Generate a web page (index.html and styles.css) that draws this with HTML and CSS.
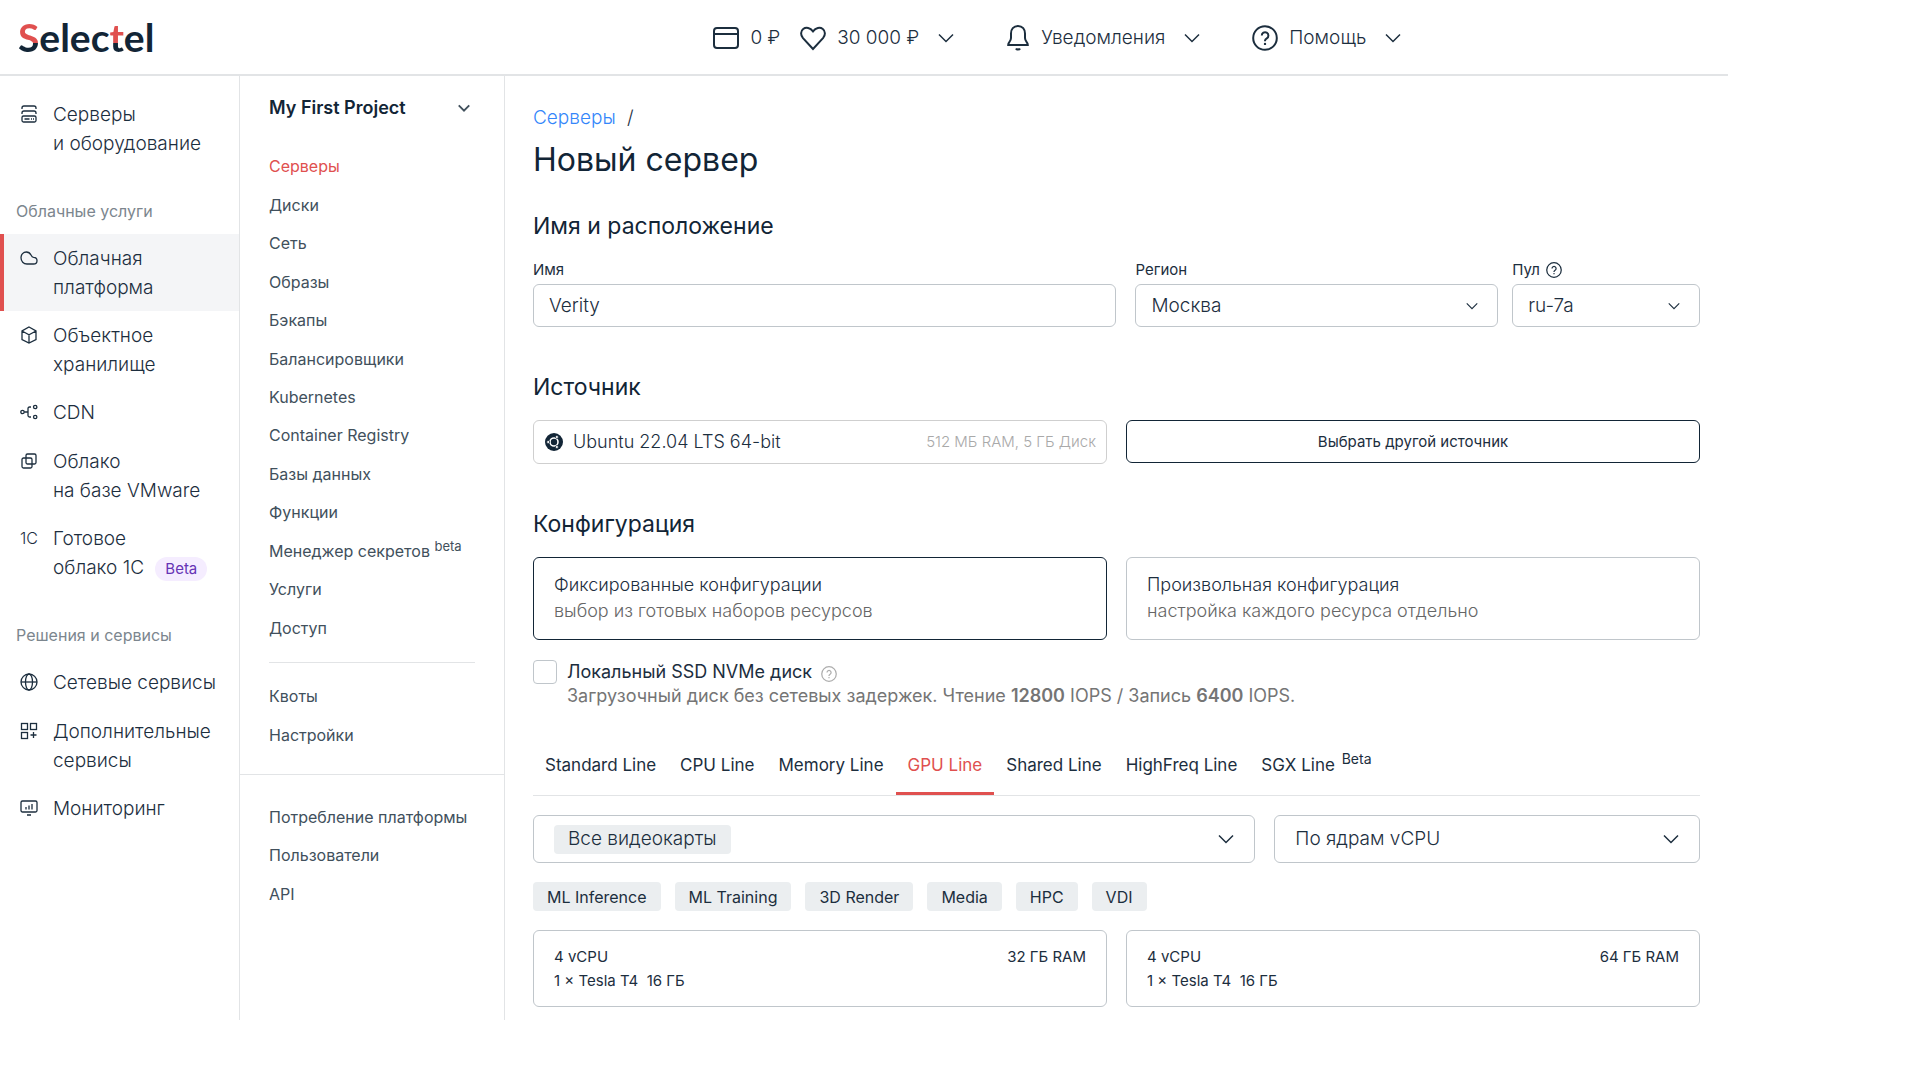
FILE: index.html
```html
<!DOCTYPE html>
<html lang="ru">
<head>
<meta charset="utf-8">
<meta name="viewport" content="width=device-width, initial-scale=1">
<title>Новый сервер — Selectel</title>
<link rel="stylesheet" href="styles.css">
</head>
<body>
<svg class="sprite" aria-hidden="true">
  <symbol id="chevron" viewBox="0 0 16 10"><path d="M1 1.5 8 8.5 15 1.5"/></symbol>
  <symbol id="help" viewBox="0 0 26 26"><circle cx="13" cy="13" r="11.8"/><path d="M9.8 10.6a3.3 3.3 0 1 1 5 2.8c-1.2.7-1.8 1.2-1.8 2.4v.4"/><circle class="dot" cx="13" cy="18.9" r="1.2"/></symbol>
</svg>
<div class="app">
  <header class="header">
    <a class="logo" href="#" aria-label="Selectel"><span class="logo-s">S</span>elec<span class="logo-t">t</span>el</a>
    <nav class="topbar" aria-label="Аккаунт">
      <button class="top-item balance" type="button">
        <svg class="icon-top" viewBox="0 0 26 26"><rect x="1" y="3" width="24" height="20" rx="3"/><path d="M1 9h24"/></svg>
        <span>0 ₽</span>
        <svg class="icon-top heart" viewBox="0 0 26 26"><path d="M13 24 3 13.2C.4 10.2.5 6 3.200 4c2.900-2.200 7-1.300 9.800 2.400C15.800 2.700 19.900 1.800 22.800 4c2.700 2 2.800 6.200.2 9.200z"/></svg>
        <span>30 000 ₽</span>
        <svg class="chevron top-chevron"><use href="#chevron"/></svg>
      </button>
      <button class="top-item" type="button">
        <svg class="icon-top bell" viewBox="0 0 24 26"><path d="M12 1C7.500 1 5 4.400 5 8.500v4.500c0 1.800-.7 3-1.800 4.400-.6.800-1 1.600-1 2.600h19.600c0-1-.4-1.800-1-2.600C19.700 16 19 14.800 19 13V8.500C19 4.400 16.500 1 12 1z"/><path d="M10 23.500c.6 1.400 3.400 1.400 4 0"/></svg>
        <span>Уведомления</span>
        <svg class="chevron top-chevron"><use href="#chevron"/></svg>
      </button>
      <button class="top-item" type="button">
        <svg class="icon-top"><use href="#help"/></svg>
        <span>Помощь</span>
        <svg class="chevron top-chevron"><use href="#chevron"/></svg>
      </button>
    </nav>
  </header>

  <div class="columns">
    <nav class="services" aria-label="Услуги">
      <ul>
        <li><a class="service" href="#"><svg class="icon" viewBox="0 0 18 18"><path d="M2 4V3a2 2 0 0 1 2-2h10a2 2 0 0 1 2 2v1M2 9V8a2 2 0 0 1 2-2h10a2 2 0 0 1 2 2v1"/><rect x="2" y="11" width="14" height="6" rx="1.500"/><path d="M4.500 14h5M11 14h1M13 14h1"/></svg><span>Серверы<br>и оборудование</span></a></li>
      </ul>
      <h2 class="group-title">Облачные услуги</h2>
      <ul>
        <li><a class="service active" href="#" aria-current="page"><svg class="icon" viewBox="0 0 18 18"><path d="M6.300 3C3.300 3 1 5.500 1 8.700 1 12.300 3.500 15 7 15h6.400C15.600 15 17 13.500 17 11.700c0-2-1.400-3.300-3.400-3.400C12.300 8.200 11.700 7.500 11 6 10 4 8.500 3 6.300 3z"/></svg><span>Облачная<br>платформа</span></a></li>
        <li><a class="service" href="#"><svg class="icon" viewBox="0 0 18 18"><path d="M9 1 16 5v8.500L9 17 2 13.500V5zM2 5l7 3.800L16 5M9 8.800V17"/></svg><span>Объектное<br>хранилище</span></a></li>
        <li><a class="service" href="#"><svg class="icon" viewBox="0 0 18 18"><circle cx="2.500" cy="9" r="1.700"/><circle cx="15.200" cy="4" r="1.700"/><circle cx="15.200" cy="14" r="1.700"/><path d="M4.300 9H8M11 4H9.500Q8 4 8 5.500v7Q8 14 9.500 14H11"/></svg><span>CDN</span></a></li>
        <li><a class="service" href="#"><svg class="icon" viewBox="0 0 18 18"><rect x="6" y="2" width="10" height="10" rx="1.500"/><rect x="2" y="6" width="10" height="10" rx="1.500"/></svg><span>Облако<br>на базе VMware</span></a></li>
        <li><a class="service" href="#"><span class="icon icon-text">1С</span><span>Готовое<br>облако 1С <span class="badge">Beta</span></span></a></li>
      </ul>
      <h2 class="group-title">Решения и сервисы</h2>
      <ul>
        <li><a class="service" href="#"><svg class="icon" viewBox="0 0 18 18"><circle cx="9" cy="9" r="8"/><ellipse cx="9" cy="9" rx="3.500" ry="8"/><path d="M1 9h16"/></svg><span>Сетевые сервисы</span></a></li>
        <li><a class="service" href="#"><svg class="icon" viewBox="0 0 18 18"><rect x="1.500" y="1.500" width="6" height="6"/><rect x="10.500" y="1.500" width="6" height="6"/><rect x="1.500" y="10.500" width="6" height="6"/><path d="M13.500 10v6M10.500 13h6"/></svg><span>Дополнительные<br>сервисы</span></a></li>
        <li><a class="service" href="#"><svg class="icon" viewBox="0 0 18 18"><rect x="1" y="2" width="16" height="11" rx="1.500"/><path d="M7 16h4M6 10.500V8M9 10.500V6.500M12 10.500V5"/></svg><span>Мониторинг</span></a></li>
      </ul>
    </nav>

    <nav class="project" aria-label="Проект">
      <button class="project-switch" type="button">My First Project <svg class="chevron project-chevron"><use href="#chevron"/></svg></button>
      <ul class="menu menu-main">
        <li><a class="current" href="#">Серверы</a></li>
        <li><a href="#">Диски</a></li>
        <li><a href="#">Сеть</a></li>
        <li><a href="#">Образы</a></li>
        <li><a href="#">Бэкапы</a></li>
        <li><a href="#">Балансировщики</a></li>
        <li><a href="#">Kubernetes</a></li>
        <li><a href="#">Container Registry</a></li>
        <li><a href="#">Базы данных</a></li>
        <li><a href="#">Функции</a></li>
        <li><a href="#">Менеджер секретов <sup>beta</sup></a></li>
        <li><a href="#">Услуги</a></li>
        <li><a href="#">Доступ</a></li>
      </ul>
      <hr class="menu-divider">
      <ul class="menu menu-settings">
        <li><a href="#">Квоты</a></li>
        <li><a href="#">Настройки</a></li>
      </ul>
      <ul class="menu menu-account">
        <li><a href="#">Потребление платформы</a></li>
        <li><a href="#">Пользователи</a></li>
        <li><a href="#">API</a></li>
      </ul>
    </nav>

    <main class="main">
      <div class="breadcrumbs"><a href="#">Серверы</a> <span>/</span></div>
      <h1>Новый сервер</h1>

      <section>
        <h2>Имя и расположение</h2>
        <div class="place">
          <div class="field">
            <label for="name">Имя</label>
            <input class="control" id="name" type="text" value="Verity">
          </div>
          <div class="field">
            <label for="region">Регион</label>
            <div class="select">
              <select class="control" id="region"><option>Москва</option></select>
              <svg class="chevron field-chevron"><use href="#chevron"/></svg>
            </div>
          </div>
          <div class="field">
            <label for="pool">Пул <svg class="help-small"><use href="#help"/></svg></label>
            <div class="select">
              <select class="control" id="pool"><option>ru-7a</option></select>
              <svg class="chevron field-chevron"><use href="#chevron"/></svg>
            </div>
          </div>
        </div>
      </section>

      <section>
        <h2>Источник</h2>
        <div class="pair">
          <div class="source">
            <svg class="os" viewBox="0 0 18 18"><circle class="os-bg" cx="9" cy="9" r="9"/><circle class="os-ring" cx="9" cy="9" r="4"/><circle class="os-dot" cx="3.200" cy="9" r="1.500"/><circle class="os-dot" cx="11.900" cy="4" r="1.500"/><circle class="os-dot" cx="11.900" cy="14" r="1.500"/></svg>
            <span>Ubuntu 22.04 LTS 64-bit</span>
            <span class="source-note">512 МБ RAM, 5 ГБ Диск</span>
          </div>
          <button class="source-button" type="button">Выбрать другой источник</button>
        </div>
      </section>

      <section>
        <h2>Конфигурация</h2>
        <div class="pair">
          <label class="card config"><input type="radio" name="config" checked><span>Фиксированные конфигурации</span><span class="muted">выбор из готовых наборов ресурсов</span></label>
          <label class="card config"><input type="radio" name="config"><span>Произвольная конфигурация</span><span class="muted">настройка каждого ресурса отдельно</span></label>
        </div>
        <div class="check">
          <input id="nvme" type="checkbox">
          <div>
            <label for="nvme">Локальный SSD NVMe диск</label> <svg class="help-small help-muted"><use href="#help"/></svg>
            <p class="muted">Загрузочный диск без сетевых задержек. Чтение <b>12800</b> IOPS / Запись <b>6400</b> IOPS.</p>
          </div>
        </div>
      </section>

      <div class="tabs" role="tablist">
        <button type="button" role="tab" aria-selected="false">Standard Line</button>
        <button type="button" role="tab" aria-selected="false">CPU Line</button>
        <button type="button" role="tab" aria-selected="false">Memory Line</button>
        <button type="button" role="tab" aria-selected="true">GPU Line</button>
        <button type="button" role="tab" aria-selected="false">Shared Line</button>
        <button type="button" role="tab" aria-selected="false">HighFreq Line</button>
        <button type="button" role="tab" aria-selected="false">SGX Line <sup>Beta</sup></button>
      </div>

      <div class="filters">
        <div class="filter">
          <select class="filter-tag" aria-label="Видеокарта"><option>Все видеокарты</option></select>
          <svg class="chevron filter-chevron"><use href="#chevron"/></svg>
        </div>
        <div class="filter">
          <select aria-label="Сортировка"><option>По ядрам vCPU</option></select>
          <svg class="chevron filter-chevron"><use href="#chevron"/></svg>
        </div>
      </div>

      <div class="chips">
        <button type="button">ML Inference</button>
        <button type="button">ML Training</button>
        <button type="button">3D Render</button>
        <button type="button">Media</button>
        <button type="button">HPC</button>
        <button type="button">VDI</button>
      </div>

      <div class="pair">
        <label class="card flavor"><input type="radio" name="flavor"><span>4 vCPU</span><span>32 ГБ RAM</span><span>1 × Tesla T4 &nbsp;16 ГБ</span></label>
        <label class="card flavor"><input type="radio" name="flavor"><span>4 vCPU</span><span>64 ГБ RAM</span><span>1 × Tesla T4 &nbsp;16 ГБ</span></label>
      </div>
    </main>
  </div>
</div>
</body>
</html>
```
FILE: styles.css
```css
:root {
  --ink: #122536;
  --text: #1c2e3e;
  --soft: #41505c;
  --muted: #757575;
  --red: #e0504f;
  --line: #e2e4e6;
  --border: #c0c6cb;
  --chip: #ebeef0;
}

* { box-sizing: border-box; }

body {
  margin: 0;
  background: #fff;
  color: var(--text);
  font: 300 19px/24px Inter, "Liberation Sans", sans-serif;
}

ul { margin: 0; padding: 0; list-style: none; }
a { color: inherit; text-decoration: none; }
button, input, select { font: inherit; color: inherit; }
button { background: none; border: 0; padding: 0; cursor: pointer; }
h1, h2, p { margin: 0; font-weight: 400; }
b { font-weight: 600; }
svg { fill: none; stroke: currentColor; flex: none; }

.sprite { display: none; }
.dot { fill: currentColor; stroke: none; }
.chevron { width: 16px; height: 10px; }

.app { width: 90%; }

.header {
  display: grid;
  grid-template-columns: 41% 1fr;
  align-items: center;
  height: 76px;
  border-bottom: 2px solid var(--line);
}

.logo {
  padding-left: 18px;
  color: var(--ink);
  font: 700 39px/48px Lato, sans-serif;
}
.logo-s, .logo-t {
  color: transparent;
  background: linear-gradient(var(--red) 62%, var(--ink) 62%);
  background-clip: text;
  -webkit-background-clip: text;
}

.topbar { display: flex; gap: 52px; padding: 1px 0 0 5px; }
.top-item { display: flex; align-items: center; gap: 11px; white-space: nowrap; }
.icon-top { width: 26px; height: 26px; stroke-width: 2; }
.bell { width: 24px; }
.heart { margin-left: 9px; }
.top-chevron { margin-left: 8px; stroke-width: 1.500; }

.columns { display: flex; align-items: stretch; }

.services {
  width: 240px;
  flex: none;
  padding-top: 14px;
  border-right: 1px solid var(--line);
}
.service {
  display: flex;
  gap: 15px;
  min-height: 49px;
  padding: 10px 0 9px 16px;
  border-left: 4px solid transparent;
  line-height: 29px;
  white-space: nowrap;
}
.service.active { background: #f4f5f7; border-left-color: var(--red); }
.icon { width: 18px; height: 18px; margin-top: 5px; stroke-width: 1.300; }
.icon-text { margin: 0; font-size: 16px; line-height: 29px; }
.badge {
  display: inline-block;
  margin-left: 6px;
  padding: 0 10px;
  border-radius: 12px;
  background: #f5edff;
  color: #6633b5;
  font-size: 15px;
  font-weight: 400;
  line-height: 24px;
}
.group-title {
  padding: 34px 16px 13px;
  color: #7c868e;
  font-size: 16px;
  line-height: 20px;
}

.project {
  width: 265px;
  flex: none;
  padding-top: 17px;
  border-right: 1px solid var(--line);
  color: var(--soft);
  font-size: 16px;
  font-weight: 400;
}
.project-switch {
  display: flex;
  align-items: center;
  justify-content: space-between;
  width: 100%;
  padding: 0 34px 0 29px;
  color: var(--ink);
  font-size: 18px;
  font-weight: 600;
  line-height: 30px;
}
.project-chevron { width: 12px; height: 8px; stroke-width: 2.500; color: var(--soft); }
.menu { display: grid; grid-auto-rows: 1fr; align-items: center; padding: 0 29px; }
.menu a { white-space: nowrap; }
.menu sup { font-size: 13px; line-height: 0; }
.menu-main { height: 500px; margin-top: 24px; }
.menu-divider { height: 1px; margin: 15px 29px 14px; border: 0; background: var(--line); }
.menu-settings { height: 77px; }
.menu-account {
  height: 139px;
  margin-top: 20px;
  padding-top: 23px;
  border-top: 1px solid var(--line);
}
.menu .current { color: var(--red); }

.main { flex: 1; min-width: 0; padding: 29px 28px 13px; }

.breadcrumbs a { margin-right: 6px; color: #3486fa; }
.breadcrumbs { line-height: 26px; }
h1 { margin-top: 7px; color: var(--ink); font-size: 32px; line-height: 44px; }
.main h2 { margin-bottom: 16px; color: var(--ink); font-size: 23px; line-height: 34px; }
.main section { margin-top: 43px; }
.main h1 + section { margin-top: 27px; }

.place { display: grid; grid-template-columns: 589fr 363fr 188fr; column-gap: 14px; }
.field:first-child { padding-right: 5px; }
.field label {
  display: flex;
  align-items: center;
  gap: 6px;
  padding-bottom: 3px;
  font-size: 15px;
  font-weight: 400;
  line-height: 22px;
}
.help-small { width: 16px; height: 16px; stroke-width: 2; }
.control {
  width: 100%;
  height: 43px;
  padding: 0 15px;
  border: 1px solid var(--border);
  border-radius: 6px;
  background: #fff;
}
select { appearance: none; }
.select { display: grid; align-items: center; }
.select > * { grid-area: 1 / 1; }
.field-chevron { width: 12px; height: 8px; margin-right: 20px; justify-self: end; stroke-width: 1.500; }

.pair { display: grid; grid-template-columns: 1fr 1fr; gap: 19px; }
.source {
  display: flex;
  align-items: center;
  gap: 10px;
  height: 44px;
  padding: 0 10px 0 11px;
  border: 1px solid #cfcfcf;
  border-radius: 6px;
  font-size: 18px;
}
.source-note { margin-left: auto; color: #a9a9a9; font-size: 15px; }
.os { width: 18px; height: 18px; }
.os-bg { fill: var(--ink); stroke: none; }
.os-ring { stroke: #fff; stroke-width: 1.600; }
.os-dot { fill: #fff; stroke: var(--ink); stroke-width: .7; }
.source-button {
  height: 43px;
  border: 1px solid var(--ink);
  border-radius: 6px;
  font-size: 15px;
  font-weight: 400;
}

.card {
  border: 1px solid var(--border);
  border-radius: 6px;
  padding: 14px 20px;
  cursor: pointer;
}
.card input { appearance: none; position: absolute; margin: 0; }
.card:has(input:checked) { border-color: var(--ink); }
.config { display: flex; flex-direction: column; height: 83px; font-size: 18px; line-height: 26px; }
.config .muted { color: #666; }
.flavor {
  display: grid;
  grid-template-columns: 1fr auto;
  height: 77px;
  font-size: 15px;
  font-weight: 400;
}
.muted { color: var(--muted); }

.check { display: flex; gap: 10px; margin-top: 20px; font-size: 18px; font-weight: 400; }
.check input {
  appearance: none;
  width: 24px;
  height: 24px;
  margin: 0;
  border: 1px solid var(--border);
  border-radius: 4px;
}
.check .help-small { margin-left: 4px; vertical-align: -4px; }
.help-muted { color: #adadad; }

.tabs { display: flex; margin-top: 36px; border-bottom: 1px solid var(--line); }
.tabs button {
  padding: 9px 12px 15px;
  border-bottom: 3px solid transparent;
  font-size: 17px;
  font-weight: 400;
  white-space: nowrap;
}
.tabs sup { margin-left: 2px; font-size: 14px; line-height: 0; }
.tabs [aria-selected="true"] { color: var(--red); border-bottom-color: var(--red); }

.filters { display: grid; grid-template-columns: 723fr 426fr; gap: 19px; margin-top: 19px; }
.filter {
  display: flex;
  align-items: center;
  justify-content: space-between;
  height: 48px;
  padding: 0 20px;
  border: 1px solid var(--border);
  border-radius: 6px;
}
.filter select { border: 0; padding: 0; background: none; height: 29px; }
.filter .filter-tag { padding: 0 14px; border-radius: 4px; background: var(--chip); }
.filter-chevron { stroke-width: 1.500; }

.chips { display: flex; gap: 14px; margin: 19px 0; }
.chips button {
  height: 29px;
  padding: 0 14px;
  border-radius: 4px;
  background: var(--chip);
  font-size: 16px;
  font-weight: 400;
}
```
